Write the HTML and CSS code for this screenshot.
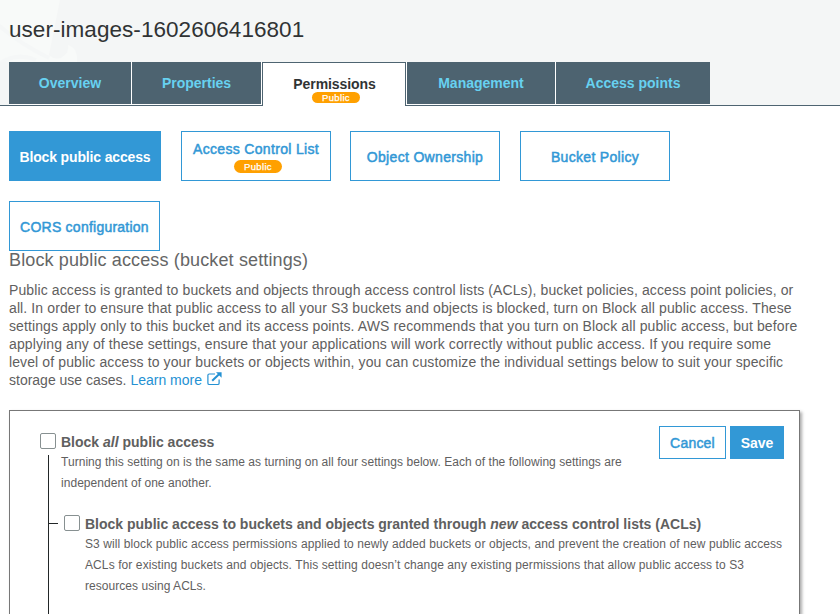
FILE: index.html
```html
<!DOCTYPE html>
<html lang="en">
<head>
<meta charset="utf-8">
<title>user-images-1602606416801</title>
<link rel="stylesheet" href="styles.css">
</head>
<body>
<header class="header">
  <svg class="watermark" width="90" height="62" viewBox="0 0 90 62"><path fill="#f8faf9" d="M0 0H60L49 55Q54 60 61 58Q70 52 68 45Q78 48 77 62H0Z"/><path fill="none" stroke="#f5f7f7" stroke-width="4" d="M-2 25Q22 45 49 58M0 63Q18 52 36 60"/></svg>
  <h1 class="title">user-images-1602606416801</h1>
  <nav class="tabs">
    <a class="tab overview">Overview</a>
    <a class="tab properties">Properties</a>
    <a class="tab permissions">Permissions<span class="pill">Public</span></a>
    <a class="tab management">Management</a>
    <a class="tab access-points">Access points</a>
  </nav>
</header>
<main class="content">
  <nav class="subnav">
    <a class="sub active">Block public access</a>
    <a class="sub acl">Access Control List<span class="pill">Public</span></a>
    <a class="sub ownership">Object Ownership</a>
    <a class="sub policy">Bucket Policy</a>
    <a class="sub cors">CORS configuration</a>
  </nav>
  <h2 class="heading">Block public access (bucket settings)</h2>
  <p class="intro"><span class="body">Public access is granted to buckets and objects through access control lists (ACLs), bucket policies, access point policies, or<br>all. In order to ensure that public access to all your S3 buckets and objects is blocked, turn on Block all public access. These<br>settings apply only to this bucket and its access points. AWS recommends that you turn on Block all public access, but before<br>applying any of these settings, ensure that your applications will work correctly without public access. If you require some<br>level of public access to your buckets or objects within, you can customize the individual settings below to suit your specific</span><br>storage use cases. <a class="learn">Learn more <svg class="external" width="15" height="14" viewBox="0 0 15 14"><path fill="none" stroke="currentColor" stroke-width="1.2" d="M8 2H2.2Q.9 2 .9 3.3V11.2Q.9 12.5 2.2 12.5H10.8Q12.1 12.5 12.1 11.2V7.5"/><path fill="none" stroke="currentColor" stroke-width="2" d="M5.2 8.8L12 2.3"/><path fill="currentColor" d="M9 .3H14.6V5.8L12.8 4L10.8 2.1Z"/></svg></a></p>
  <section class="card">
    <div class="tree">
      <i class="box"></i>
      <div class="setting">
        <h3>Block <em>all</em> public access</h3>
        <p>Turning this setting on is the same as turning on all four settings below. Each of the following settings are<br>independent of one another.</p>
      </div>
      <div class="actions"><button class="cancel">Cancel</button><button class="save">Save</button></div>
    </div>
    <div class="children">
      <div class="child">
        <i class="branch"></i>
        <i class="box"></i>
        <div class="setting">
          <h3>Block public access to buckets and objects granted through <em>new</em> access control lists (ACLs)</h3>
          <p><span class="body">S3 will block public access permissions applied to newly added buckets or objects, and prevent the creation of new public access<br>ACLs for existing buckets and objects. This setting doesn’t change any existing permissions that allow public access to S3</span><br>resources using ACLs.</p>
        </div>
      </div>
    </div>
    <i class="trunk"></i>
  </section>
</main>
</body>
</html>
```
FILE: styles.css
```css
* { box-sizing: border-box; }
html, body { height: 100%; }
body { margin: 0; overflow: hidden; background: #fff; color: #5f6060; font-family: "Liberation Sans", Arial, sans-serif; font-size: 14px; }
h1, h2, h3, p { margin: 0; white-space: nowrap; }
.header { position: relative; height: 106px; background: #f4f6f6; border-bottom: 1px solid #4e6471; }
.watermark { position: absolute; left: 0; top: 0; }
.title { position: relative; height: 62px; padding: 17px 0 0 9px; color: #303334; font-size: 22.5px; font-weight: 400; line-height: 26px; letter-spacing: .05px; }
.tabs { position: relative; display: flex; gap: 1px; margin-left: 9px; width: 701px; height: 43px; background: #fff; }
.tab { display: flex; align-items: center; justify-content: center; height: 42px; background: #4d6370; color: #67d1f0; font-weight: 700; }
.overview { width: 122px; }
.properties { width: 129px; }
.permissions { width: 144px; height: 44px; flex-direction: column; justify-content: flex-start; padding: 13px 0 0 1px; letter-spacing: -.08px; border: 1px solid #4e6471; border-bottom: 0; background: #fff; color: #303334; line-height: 16px; }
.management { width: 148px; }
.access-points { width: 154px; }
.pill { display: block; width: 48px; height: 11px; margin-left: 3px; border-radius: 6px; background: #ffa000; color: #fff; font-size: 9.5px; font-weight: 400; line-height: 11px; text-align: center; letter-spacing: .35px; -webkit-text-stroke: .25px currentColor; }
.content { padding: 25px 0 0 9px; }
.subnav { display: flex; flex-wrap: wrap; gap: 20px; width: 700px; }
.sub { display: flex; flex-direction: column; align-items: center; justify-content: center; width: 150px; height: 50px; border: 1px solid #3298d6; color: #3298d6; padding-top: 2px; letter-spacing: .32px; -webkit-text-stroke: .5px currentColor; }
.active { width: 152px; background: #3298d6; color: #fff; font-weight: 700; letter-spacing: -.15px; -webkit-text-stroke: 0; }
.ownership { margin-left: -1px; }
.cors { width: 151px; letter-spacing: .24px; }
.sub .pill { height: 13px; line-height: 13px; margin-top: 3px; margin-left: 4px; border-radius: 7px; -webkit-text-stroke: .25px currentColor; }
.heading { height: 30px; font-size: 18px; font-weight: 400; line-height: 18px; letter-spacing: .135px; color: #656666; }
.intro { line-height: 18px; }
.body { letter-spacing: .11px; }
.learn { color: #2491d3; }
.external { margin-left: 1px; vertical-align: -1px; }
.card { position: relative; width: 791px; height: 204px; margin-top: 21px; padding: 15px 15px 0 30px; border: 1px solid #777; border-bottom: 0; box-shadow: 2px 2px 3px #aaa; }
.tree, .child { display: flex; align-items: flex-start; }
.box { flex: none; width: 16px; height: 16px; margin: 7px 5px 0 0; border: 1px solid #879091; border-radius: 2px; background: #fff; }
.setting { flex: none; padding-top: 7px; }
.setting h3 { height: 19px; font-size: 14px; line-height: 18px; }
.setting p { font-size: 12px; line-height: 21px; letter-spacing: .045px; }
.setting .body { letter-spacing: .095px; }
.actions { display: flex; gap: 4px; margin-left: auto; }
.actions button { height: 33px; padding: 1px 0 0; border: 1px solid #3298d6; font: 14px "Liberation Sans", Arial, sans-serif; }
.actions .cancel { width: 67px; background: #fff; color: #3298d6; letter-spacing: .2px; -webkit-text-stroke: .5px currentColor; }
.actions .save { width: 54px; background: #3298d6; color: #fff; font-weight: 700; }
.children { padding: 14px 0 0 8px; }
.branch { width: 10px; height: 1px; margin: 15px 6px 0 0; background: #222728; }
.trunk { position: absolute; left: 38px; top: 44px; bottom: 0; width: 1px; background: #222728; }
```
